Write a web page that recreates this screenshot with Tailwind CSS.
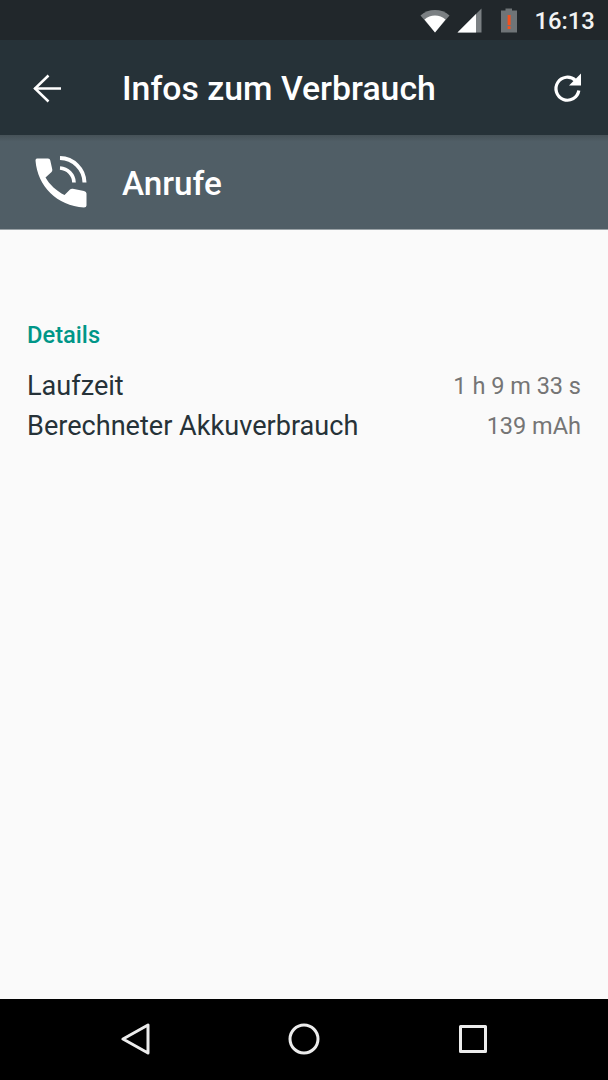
<!DOCTYPE html>
<html lang="de">
<head>
<meta charset="utf-8">
<script src="https://cdn.jsdelivr.net/npm/@tailwindcss/browser@4"></script>
</head>
<body class="m-0">
<div class="w-[608px] h-[1080px] flex flex-col overflow-hidden bg-[#fafafa] font-['Roboto',sans-serif]">
  <div class="h-[40px] bg-[#21272b] flex items-center justify-end shrink-0 relative">
    <svg class="absolute left-[420px] top-[8px]" width="30" height="25" viewBox="0 0 30 25">
      <path d="M0.5 7.5 A22 22 0 0 1 29.5 7.5 L15 24.500 Z" fill="#7b8083"/>
      <path d="M4.500 11.500 A16 16 0 0 1 25.500 11.500 L15 24.500 Z" fill="#fff"/>
    </svg>
    <svg class="absolute left-[457px] top-[8px]" width="25" height="25" viewBox="0 0 25 25">
      <path d="M24.5 0.5 V24.5 H0.5 Z" fill="#7b8083"/>
      <path d="M19 6 V24.5 H0.5 Z" fill="#fff"/>
    </svg>
    <svg class="absolute left-[500px] top-[8px]" width="18" height="25" viewBox="0 0 18 25">
      <path d="M5.5 0.5 H12 V2.5 H17 V24.5 H1 V2.5 H5.5 Z" fill="#6f7477"/>
      <rect x="7.600" y="7" width="3" height="10" fill="#f4511e"/>
      <rect x="7.600" y="18.200" width="3" height="2.800" fill="#f4511e"/>
    </svg>
    <span class="absolute left-[534.500px] top-[8px] text-[23.8px] leading-[26px] font-medium text-[#f2f3f3]">16:13</span>
  </div>
  <div class="h-[95px] bg-[#263238] flex items-center shrink-0 relative">
    <svg class="ml-[32px] mt-[2px]" width="30" height="30" viewBox="0 0 30 30" fill="none" stroke="#fff" stroke-width="2.500">
      <path d="M2.500 14.500 H29"/>
      <path d="M16.500 1.500 L3 14.500 L16.500 27.500"/>
    </svg>
    <span class="ml-[60px] text-[33.800px] leading-[40px] font-medium text-white mt-[2px]">Infos zum Verbrauch</span>
    <svg class="absolute left-[552px] top-[32px]" width="32" height="32" viewBox="0 0 32 32" fill="none">
      <path d="M23.5 8.5 A11.5 11.5 0 1 0 26.8 18.5" stroke="#fff" stroke-width="3.2"/>
      <path d="M29 1.5 V13.5 H17 Z" fill="#fff"/>
    </svg>
  </div>
  <div class="h-[95px] bg-linear-to-b from-[#465258] via-[#505e66] via-[7%] to-[#505e66] flex items-center shrink-0 border-b border-b-[#9aa2a6]">
    <svg class="ml-[34px]" width="54" height="54" viewBox="0 0 54 54">
      <path fill="#fff" d="M3 3.5 H14 Q16 3.5 16.3 5.5 L18.3 14.5 Q18.6 16 17.3 17.3 L11.5 22.5 C15.5 29.5 22.5 36 30.5 40 L36 34.6 Q37.2 33.5 38.8 33.8 L50 36 Q52.500 36.500 52.500 38.500 V50.500 Q52.500 52.500 50 52.500 C23 51 3.500 31 1.500 5.500 Q1.500 3.500 3 3.500 Z"/>
      <path fill="none" stroke="#fff" stroke-width="3.700" d="M26 13 A15 15 0 0 1 40 27.500"/>
      <path fill="none" stroke="#fff" stroke-width="4" d="M26 3 A25 25 0 0 1 50.500 27.500"/>
    </svg>
    <span class="ml-[34px] text-[33.300px] leading-[40px] font-medium text-white mt-[4px]">Anrufe</span>
  </div>
  <div class="flex-1 px-[27px] pt-[91px]">
    <div class="text-[23.700px] leading-[28px] font-medium text-[#009688]">Details</div>
    <div class="mt-[17px] flex justify-between items-center h-[40px]">
      <span class="text-[27.100px] text-[#263238]">Laufzeit</span>
      <span class="text-[23.500px] text-[#757575] mt-[2px]">1 h 9 m 33 s</span>
    </div>
    <div class="flex justify-between items-center h-[40px]">
      <span class="text-[27.100px] text-[#263238]">Berechneter Akkuverbrauch</span>
      <span class="text-[23.500px] text-[#757575] mt-[2px]">139 mAh</span>
    </div>
  </div>
  <div class="h-[81px] bg-black shrink-0 relative">
    <svg class="absolute left-[120px] top-[24px]" width="32" height="32" viewBox="0 0 32 32" fill="none" stroke="#ececec" stroke-width="3" stroke-linejoin="round">
      <path d="M28 2 V30 L3 16 Z"/>
    </svg>
    <svg class="absolute left-[288px] top-[24px]" width="32" height="32" viewBox="0 0 32 32" fill="none" stroke="#ececec" stroke-width="3">
      <circle cx="16" cy="16" r="14"/>
    </svg>
    <svg class="absolute left-[458px] top-[25px]" width="30" height="30" viewBox="0 0 30 30" fill="none" stroke="#ececec" stroke-width="3" stroke-linejoin="round">
      <rect x="2.500" y="2.500" width="25" height="25"/>
    </svg>
  </div>
</div>
</body>
</html>
